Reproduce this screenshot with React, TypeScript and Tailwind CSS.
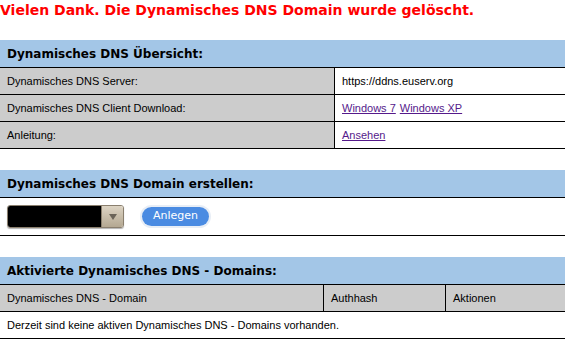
import React from "react";

const body = "font-['Liberation_Sans',Arial,sans-serif] text-[11px] text-black";
const bold = "font-['DejaVu_Sans',Verdana,sans-serif] font-bold text-[12px] text-black";

function Header({ title }: { title: string }) {
  return (
    <div className={`h-[28px] bg-[#a3c6e7] border-b border-black flex items-center px-[7px] ${bold}`}>
      {title}
    </div>
  );
}

function Row({ label, children }: { label: string; children: React.ReactNode }) {
  return (
    <div className={`flex h-[27px] border-b border-black ${body}`}>
      <div className="w-[335px] bg-[#cccccc] border-r border-black flex items-center px-[7px]">{label}</div>
      <div className="flex-1 bg-white flex items-center px-[7px]">{children}</div>
    </div>
  );
}

export default function App() {
  return (
    <div className="w-[572px] h-[346px] bg-white overflow-hidden">
      <h1 className="h-[20px] font-['DejaVu_Sans',Verdana,sans-serif] font-bold text-[14px] leading-[20px] text-[#ff0000] whitespace-nowrap">
        Vielen Dank. Die Dynamisches DNS Domain wurde gelöscht.
      </h1>

      <div className="w-[565px] mt-[20px]">
        <Header title="Dynamisches DNS Übersicht:" />
        <Row label="Dynamisches DNS Server:">https://ddns.euserv.org</Row>
        <Row label="Dynamisches DNS Client Download:">
          <a href="#" className="text-[#551a8b] underline">Windows 7</a>
          <span className="w-[4px]" />
          <a href="#" className="text-[#551a8b] underline">Windows XP</a>
        </Row>
        <Row label="Anleitung:">
          <a href="#" className="text-[#551a8b] underline">Ansehen</a>
        </Row>
      </div>

      <div className="w-[565px] mt-[21px]">
        <Header title="Dynamisches DNS Domain erstellen:" />
        <div className="h-[38px] border-b border-black flex items-center pl-[7px] gap-[18px]">
          <div className="w-[117px] h-[23px] flex rounded-[3px] overflow-hidden border border-[#8a7f6e] shadow-[0_1px_1px_rgba(0,0,0,0.3)]">
            <div className="flex-1 bg-black" />
            <div className="w-[22px] bg-gradient-to-b from-[#ddd4c4] to-[#b4a892] border-l border-[#8a7f6e] flex items-center justify-center">
              <svg width="8" height="6" viewBox="0 0 8 6"><path d="M0 0h8L4 6z" fill="#6b6459" /></svg>
            </div>
          </div>
          <button className="h-[19px] w-[67px] rounded-full bg-[#4a8be2] text-white text-[11px] font-['DejaVu_Sans',Verdana,sans-serif] ring-2 ring-[#e8eef6] flex items-center justify-center">
            Anlegen
          </button>
        </div>
      </div>

      <div className="w-[565px] mt-[21px]">
        <Header title="Aktivierte Dynamisches DNS - Domains:" />
        <div className={`flex h-[27px] border-b border-black bg-[#cccccc] ${body}`}>
          <div className="w-[324px] border-r border-black flex items-center px-[7px]">Dynamisches DNS - Domain</div>
          <div className="w-[122px] border-r border-black flex items-center px-[7px]">Authhash</div>
          <div className="flex-1 flex items-center px-[7px]">Aktionen</div>
        </div>
        <div className={`h-[27px] border-b border-black flex items-center px-[7px] ${body}`}>
          Derzeit sind keine aktiven Dynamisches DNS - Domains vorhanden.
        </div>
      </div>
    </div>
  );
}
